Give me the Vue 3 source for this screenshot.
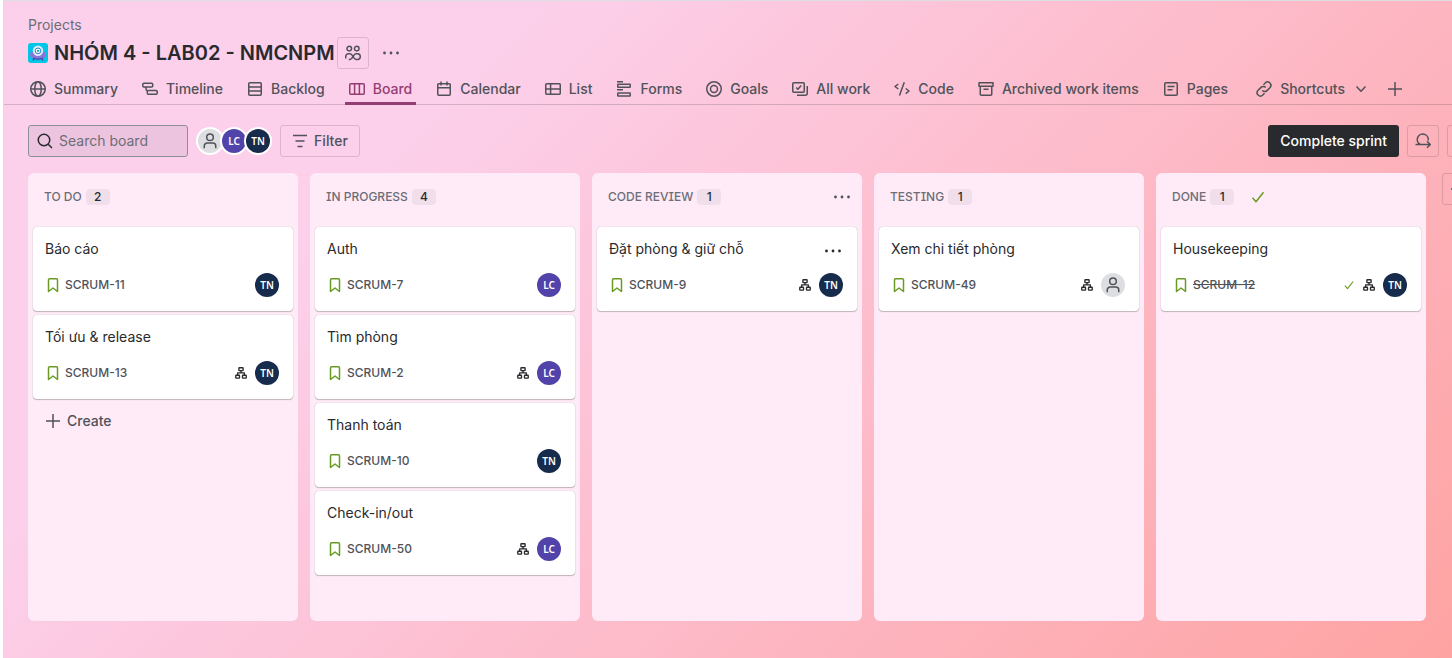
<script setup>
import { h, ref } from 'vue'

const shapes = {
  globe: '<circle cx="8" cy="8" r="7.25"/><ellipse cx="8" cy="8" rx="3.25" ry="7.25"/><path d="M.75 8h14.5"/>',
  timeline: '<rect x=".75" y="2.25" width="10" height="3.75" rx="1.2"/><rect x="5.25" y="9.5" width="10" height="3.75" rx="1.2"/><path d="M4 6v2a1.500 1.500 0 0 0 1.500 1.500"/>',
  backlog: '<rect x="1.75" y="1.75" width="12.5" height="12.5" rx="1"/><path d="M1.75 5.9h12.5M1.75 10.1h12.5"/>',
  board: '<rect x=".75" y="2.75" width="14.5" height="10.5" rx="1"/><path d="M5.6 2.75v10.5M10.4 2.75v10.5"/>',
  calendar: '<rect x="1.75" y="2.75" width="12.5" height="11.5" rx="1"/><path d="M1.75 6.75h12.5M5 .5v4M11 .5v4"/>',
  list: '<rect x=".75" y="2.75" width="14.5" height="10.5" rx="1"/><path d="M.75 8h14.5M5.6 2.75v10.5"/>',
  forms: '<path d="M1 .75h6M1 8.75h6"/><rect x="1.75" y="3.25" width="12.5" height="3" rx=".5"/><rect x="1.75" y="12" width="12.5" height="3" rx=".5"/>',
  goals: '<circle cx="8" cy="8" r="7.25"/><circle cx="8" cy="8" r="3.5"/>',
  work: '<rect x=".75" y="1.75" width="11.5" height="9.5" rx="1"/><path d="m4.2 6.5 1.7 1.7 3.3-3.8M15.25 5v7.25a2 2 0 0 1-2 2H5"/>',
  code: '<path d="M10.3 1.300 5.500 14.500M4.300 3 1 5.500 4.300 8M11.700 7.500 15 10l-3.300 2.700"/>',
  archive: '<rect x="1" y="1.75" width="14" height="3.5"/><path d="M2.25 5.25v8a1 1 0 0 0 1 1h9.5a1 1 0 0 0 1-1v-8M5.5 8.25h5"/>',
  page: '<rect x="1.75" y="1.75" width="12.5" height="12.5" rx="1"/><path d="M4.5 5.5h7M4.5 8.75h5"/>',
  link: '<path d="m7.5 3.7 1.700-1.700a3.200 3.200 0 0 1 4.700 4.700L11 9.600a3.200 3.200 0 0 1-4.700-.1M8.500 12.300 6.800 14a3.200 3.200 0 0 1-4.700-4.700L5 6.400a3.200 3.200 0 0 1 4.700.1"/>',
  chevron: '<path d="m3.5 5.5 4.5 4.75 4.5-4.75"/>',
  plus: '<path d="M8 1v14M1 8h14"/>',
  search: '<circle cx="7" cy="7" r="5.75"/><path d="m11.2 11.2 3.8 3.8"/>',
  filter: '<path d="M1 2.5h14M3.500 8h9M5.500 13.5h5"/>',
  team: '<circle cx="4.25" cy="3.6" r="2.3"/><circle cx="11.75" cy="3.6" r="2.3"/><path d="M.75 13.5v-2a2.7 2.7 0 0 1 2.7-2.7h1.6c2.7 0 3.2 5.7 5.9 5.7h1.6a2.7 2.7 0 0 0 2.7-2.7v-.3a2.7 2.7 0 0 0-2.7-2.7h-1.6c-2.7 0-3.2 5.7-5.9 5.7H3.7"/>',
  more: '<g fill="currentColor" stroke="none"><circle cx="1.5" cy="8" r="1.4"/><circle cx="8" cy="8" r="1.4"/><circle cx="14.5" cy="8" r="1.4"/></g>',
  sprint: '<path d="M.5 11.500H15M12 8.200l3.300 3.300L12 14.800M5.200 11.500A5.500 5.500 0 1 1 13.200 7.500"/>',
  check: '<path d="m2.5 8.8 3.5 4 7.5-9.5"/>',
  person: '<circle cx="8" cy="4.3" r="3.3"/><path d="M2.25 15.25V13a3 3 0 0 1 3-3h5.5a3 3 0 0 1 3 3v2.25"/>',
  story: '<path d="M3.5 14.5V2.75a1 1 0 0 1 1-1h7a1 1 0 0 1 1 1V14.5L8 11Z"/>',
  tree: '<rect x="5.2" y="1" width="5.6" height="3.8" rx=".6"/><rect x="1" y="11" width="5" height="3.8" rx=".6"/><rect x="10" y="11" width="5" height="3.8" rx=".6"/><path d="M8 4.8v3M3.5 11V7.9h9V11"/>'
}

const Icon = ({ name }) =>
  h('svg', {
    viewBox: '0 0 16 16', fill: 'none', stroke: 'currentColor',
    'stroke-width': name === 'tree' ? 1.8 : 1.5, 'stroke-linejoin': 'round',
    'aria-hidden': 'true', innerHTML: shapes[name]
  })
Icon.props = ['name']

const tabs = [
  ['Summary', 'globe'], ['Timeline', 'timeline'], ['Backlog', 'backlog'], ['Board', 'board'],
  ['Calendar', 'calendar'], ['List', 'list'], ['Forms', 'forms'], ['Goals', 'goals'],
  ['All work', 'work'], ['Code', 'code'], ['Archived work items', 'archive'], ['Pages', 'page']
]

const columns = [
  { title: 'TO DO', create: true, cards: [
    { title: 'Báo cáo', id: 'SCRUM-11', who: 'TN' },
    { title: 'Tối ưu & release', id: 'SCRUM-13', who: 'TN', tree: true }
  ] },
  { title: 'IN PROGRESS', cards: [
    { title: 'Auth', id: 'SCRUM-7', who: 'LC' },
    { title: 'Tìm phòng', id: 'SCRUM-2', who: 'LC', tree: true },
    { title: 'Thanh toán', id: 'SCRUM-10', who: 'TN' },
    { title: 'Check-in/out', id: 'SCRUM-50', who: 'LC', tree: true }
  ] },
  { title: 'CODE REVIEW', menu: true, cards: [
    { title: 'Đặt phòng & giữ chỗ', id: 'SCRUM-9', who: 'TN', tree: true, menu: true }
  ] },
  { title: 'TESTING', cards: [{ title: 'Xem chi tiết phòng', id: 'SCRUM-49', who: '', tree: true }] },
  { title: 'DONE', done: true, cards: [
    { title: 'Housekeeping', id: 'SCRUM-12', who: 'TN', tree: true, done: true }
  ] }
]

const query = ref('')
</script>

<template>
  <div class="page">
    <header class="head">
      <a class="crumb" href="#">Projects</a>
      <div class="title-row">
        <svg class="logo" viewBox="0 0 20 20" aria-hidden="true">
          <rect width="20" height="20" rx="3" fill="#00c7e5" />
          <path d="M6 15.500 5 17.500M14 15.500l1 2" stroke="#5243aa" stroke-width="1.4" />
          <path d="M2 11.500C2 8.500 5 8 10 8s8 .5 8 3.500c0 3-3.500 4.500-8 4.500s-8-1.500-8-4.500Z" fill="#8777d9" />
          <path d="M5 14.500c3 1.200 7 1.200 10 0v1.200c-3 1.300-7 1.300-10 0Z" fill="#5243aa" />
          <circle cx="10" cy="7.800" r="5.200" fill="#deebff" />
          <circle cx="10" cy="7.800" r="2.800" fill="#fff" stroke="#2684c7" stroke-width="1" />
          <circle cx="10" cy="7.800" r="1.100" fill="#00a3bf" />
        </svg>
        <h1>NHÓM 4 - LAB02 - NMCNPM</h1>
        <button class="square" aria-label="Team"><Icon name="team" class="i16" /></button>
        <button class="plain more" aria-label="More actions"><Icon name="more" class="i16" /></button>
      </div>
    </header>

    <nav class="tabs">
      <a v-for="[label, icon] in tabs" :key="label" href="#" class="tab" :class="{ active: label === 'Board' }">
        <Icon :name="icon" class="i16" />{{ label }}
      </a>
      <button class="tab plain shortcuts"><Icon name="link" class="i16" />Shortcuts<Icon name="chevron" class="i16" /></button>
      <button class="tab plain add-tab" aria-label="Add tab"><Icon name="plus" class="i16" /></button>
    </nav>

    <div class="toolbar">
      <label class="search">
        <Icon name="search" class="i16" />
        <input v-model="query" type="text" placeholder="Search board" aria-label="Search board" />
      </label>
      <div class="people">
        <span class="avatar none"><Icon name="person" class="i16" /></span>
        <span class="avatar lc">LC</span>
        <span class="avatar tn">TN</span>
      </div>
      <button class="filter"><Icon name="filter" class="i16" />Filter</button>
      <div class="actions">
        <button class="primary">Complete sprint</button>
        <button class="square" aria-label="Sprint"><Icon name="sprint" class="i16" /></button>
        <button class="square" aria-label="View settings"></button>
      </div>
    </div>

    <main class="board">
      <section v-for="col in columns" :key="col.title" class="column">
        <div class="col-head">
          <h2>{{ col.title }}</h2>
          <span class="count">{{ col.cards.length }}</span>
          <Icon v-if="col.done" name="check" class="i16 col-check" />
          <button v-if="col.menu" class="plain col-menu" aria-label="Column actions"><Icon name="more" class="i16" /></button>
        </div>
        <article v-for="card in col.cards" :key="card.id" class="card">
          <div class="card-top">
            <h3>{{ card.title }}</h3>
            <button v-if="card.menu" class="plain card-menu" aria-label="Card actions"><Icon name="more" class="i16" /></button>
          </div>
          <div class="card-foot">
            <Icon name="story" class="i16 green" />
            <a href="#" class="key" :class="{ struck: card.done }">{{ card.id }}</a>
            <div class="meta">
              <Icon v-if="card.done" name="check" class="i12 green" />
              <Icon v-if="card.tree" name="tree" class="i12" />
              <span class="avatar" :class="card.who ? card.who.toLowerCase() : 'none'">
                <template v-if="card.who">{{ card.who }}</template>
                <Icon v-else name="person" class="i16" />
              </span>
            </div>
          </div>
        </article>
        <button v-if="col.create" class="plain create"><Icon name="plus" class="i16" />Create</button>
      </section>
      <button class="square" aria-label="Add column"><Icon name="plus" class="i16" /></button>
    </main>
  </div>
</template>

<style>
body {
  background: #fff;
}
</style>

<style scoped>
* {
  box-sizing: border-box;
}
.page {
  display: flex;
  flex-direction: column;
  min-height: 100vh;
  margin-left: 3px;
  overflow: hidden;
  border-top: 1px solid #dddee1;
  border-left: 1px solid #e8d3e2;
  background: linear-gradient(135deg, #fcd0eb 25%, #fdbdcd 56%, #fea3a2 100%);
  color: #292a2e;
  font: 14px/20px Inter, "Noto Sans", sans-serif;
}
button {
  display: flex;
  align-items: center;
  justify-content: center;
  padding: 0;
  color: #505258;
  font: inherit;
  font-weight: 500;
}
a {
  color: inherit;
  text-decoration: none;
}
h1, h2, h3 {
  margin: 0;
}
svg {
  flex: none;
}
.i16 { width: 16px; height: 16px; }
.i12 { width: 12px; height: 12px; }
.green { color: #6a9a23; }
.plain {
  border: 0;
  background: none;
}
.square, .filter {
  height: 32px;
  border: 1px solid rgba(11, 18, 14, 0.14);
  border-radius: 3px;
  background: none;
}
.square {
  flex: none;
  width: 32px;
}
.head {
  padding: 14px 24px 0;
}
.crumb {
  display: block;
  color: #6b6e76;
}
.title-row {
  display: flex;
  align-items: center;
  height: 36px;
}
.logo {
  width: 20px;
  height: 20px;
}
h1 {
  margin: 0 2px 0 6px;
  font-size: 20px;
  line-height: 24px;
  font-weight: 600;
}
.more {
  width: 32px;
  height: 32px;
  margin-left: 6px;
}
.tabs {
  display: flex;
  gap: 16px;
  height: 34px;
  padding: 0 22px;
  border-bottom: 1px solid rgba(11, 18, 14, 0.17);
}
.tab {
  display: flex;
  flex: none;
  align-items: center;
  gap: 8px;
  height: 34px;
  padding: 4px 4px 0;
  border-bottom: 3px solid transparent;
  color: #505258;
  font-weight: 500;
  white-space: nowrap;
}
.tab.active {
  border-color: #943d73;
  color: #943d73;
}
.shortcuts {
  margin-left: 4px;
}
.add-tab {
  margin-left: -6px;
}
.toolbar {
  display: flex;
  align-items: center;
  margin: 20px -27px 16px 24px;
}
.search {
  display: flex;
  align-items: center;
  gap: 6px;
  width: 160px;
  height: 32px;
  padding: 0 8px;
  border: 1px solid #8c8f97;
  border-radius: 3px;
  background: #edc4df;
}
.search input {
  width: 100%;
  min-width: 0;
  padding: 0;
  border: 0;
  outline: 0;
  background: none;
  color: #292a2e;
  font: inherit;
}
.search input::placeholder {
  color: #6b6e76;
  opacity: 1;
}
.people {
  display: flex;
  margin: 0 10px;
}
.people .avatar {
  box-shadow: 0 0 0 2px #fff;
}
.avatar {
  display: flex;
  flex: none;
  align-items: center;
  justify-content: center;
  width: 24px;
  height: 24px;
  border-radius: 50%;
  color: #fff;
  font: 600 10px/24px "Noto Sans", "Open Sans", sans-serif;
}
.none {
  background: #dddee1;
  color: #505258;
}
.lc { background: #5243aa; }
.tn { background: #172b4d; }
.filter {
  gap: 6px;
  width: 80px;
}
.actions {
  display: flex;
  gap: 8px;
  margin-left: auto;
}
.primary {
  height: 32px;
  padding: 0 12px;
  border: 0;
  border-radius: 3px;
  background: #292a2e;
  color: #fff;
}
.board {
  display: flex;
  flex: 1;
  gap: 12px;
  padding: 0 0 37px 24px;
}
.board > .square {
  margin-left: 4px;
}
.column {
  flex: none;
  width: 270px;
  padding: 0 5px;
  border-radius: 6px;
  background: #ffebf8;
}
.col-head {
  display: flex;
  align-items: center;
  height: 48px;
  margin-bottom: 6px;
  padding: 0 11px;
}
h2 {
  color: #6b6e76;
  font-size: 12px;
  line-height: 16px;
  font-weight: 500;
  font-feature-settings: "cv08";
}
.count {
  width: 24px;
  margin-left: 4px;
  border-radius: 4px;
  background: #f0dfeb;
  font-size: 12px;
  line-height: 16px;
  font-weight: 500;
  text-align: center;
}
.col-check {
  margin-left: 16px;
  color: #6a9a23;
}
.col-menu {
  width: 24px;
  height: 24px;
  margin: 0 -8px 0 auto;
}
.card {
  height: 84px;
  margin-bottom: 4px;
  padding: 12px;
  border-radius: 4px;
  background: #fff;
  box-shadow: 0 1px 1px rgba(30, 31, 33, 0.25), 0 0 1px rgba(30, 31, 33, 0.31);
}
.card-top {
  display: flex;
  justify-content: space-between;
  height: 20px;
}
h3 {
  font-size: 14px;
  line-height: 20px;
  font-weight: 400;
}
.card-menu {
  width: 24px;
  height: 24px;
  color: #292a2e;
}
.card-foot {
  display: flex;
  align-items: center;
  height: 24px;
  margin-top: 14px;
}
.key {
  margin-left: 4px;
  color: #505258;
  font-size: 12px;
  line-height: 16px;
  font-weight: 500;
}
.struck {
  text-decoration: line-through;
}
.meta {
  display: flex;
  align-items: center;
  gap: 8px;
  margin: 0 2px 0 auto;
}
.create {
  gap: 6px;
  height: 32px;
  margin-top: 6px;
  padding: 0 12px;
}
</style>
